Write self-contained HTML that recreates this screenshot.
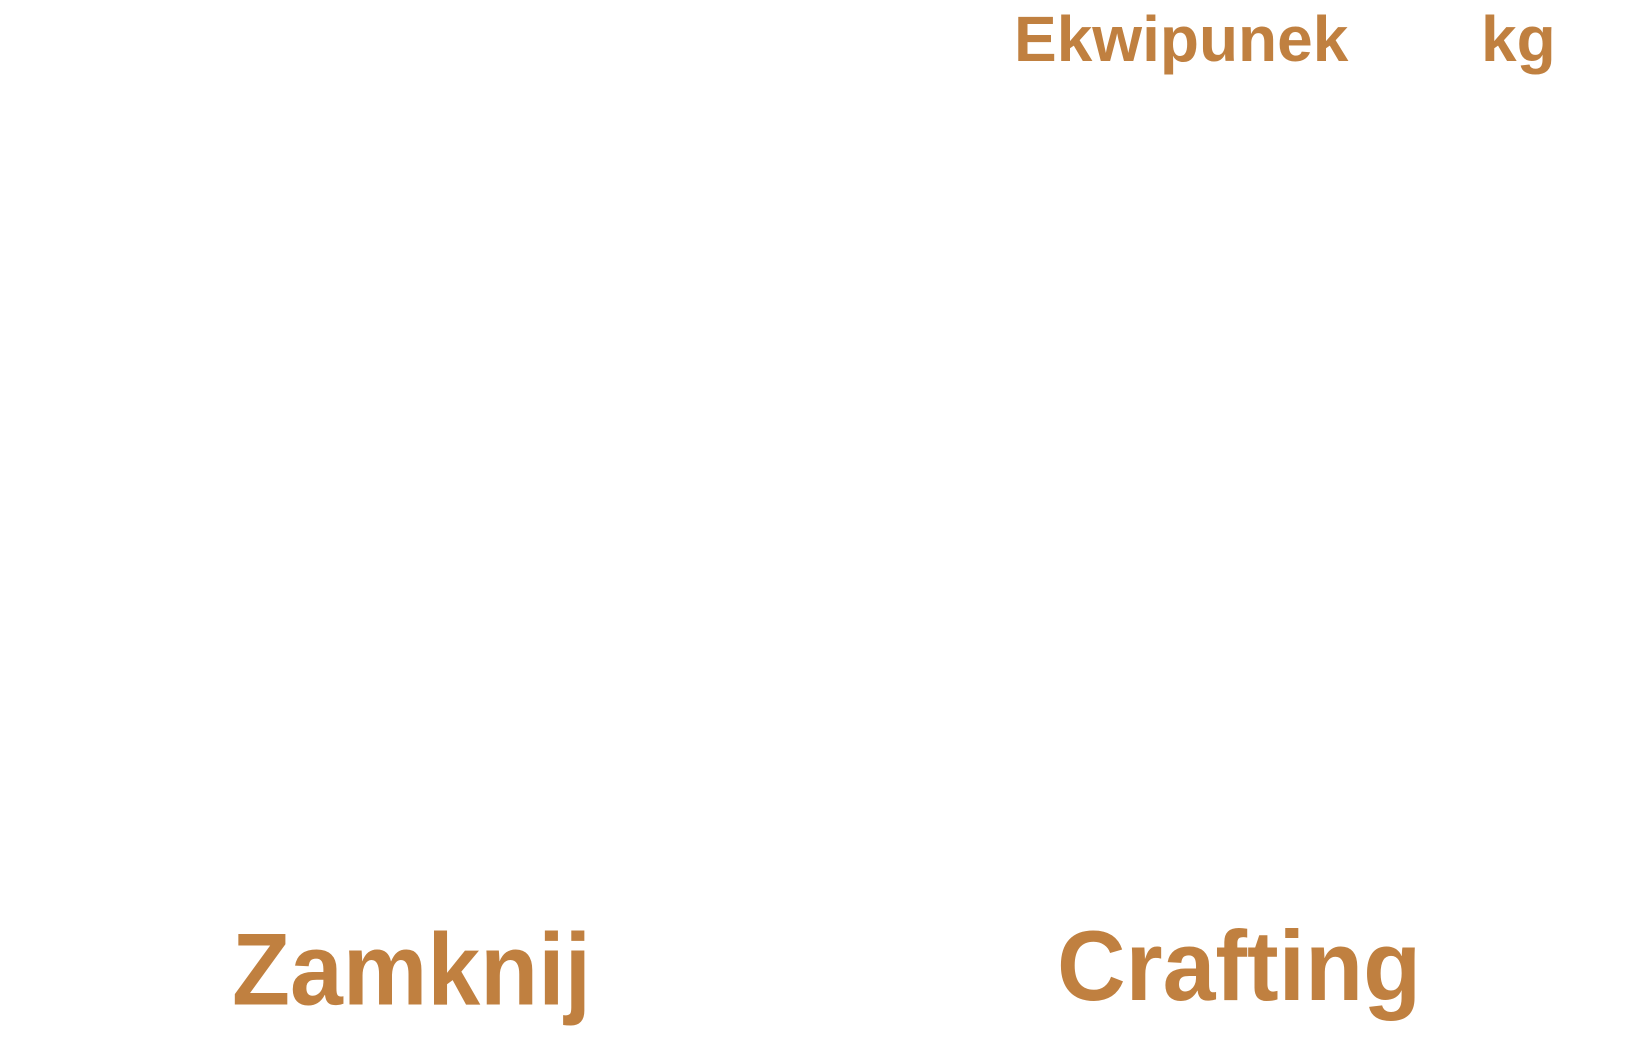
<!DOCTYPE html>
<html><head><meta charset="utf-8"><style>
html,body{margin:0;padding:0;background:#fff;width:1650px;height:1050px;overflow:hidden;position:relative}
div{position:absolute;font-family:"Liberation Sans",Arial,sans-serif;font-weight:bold;color:#c08040;line-height:1;white-space:nowrap;transform-origin:0 0}
</style></head><body>
<div style="left:1014px;top:7px;font-size:64px;">Ekwipunek</div>
<div style="left:1481px;top:7px;font-size:64px;">kg</div>
<div style="left:232px;top:920px;font-size:95px;transform:scaleY(1.07);">Zamknij</div>
<div style="left:1057px;top:917px;font-size:95px;transform:scaleY(1.05);">Crafting</div>
</body></html>
